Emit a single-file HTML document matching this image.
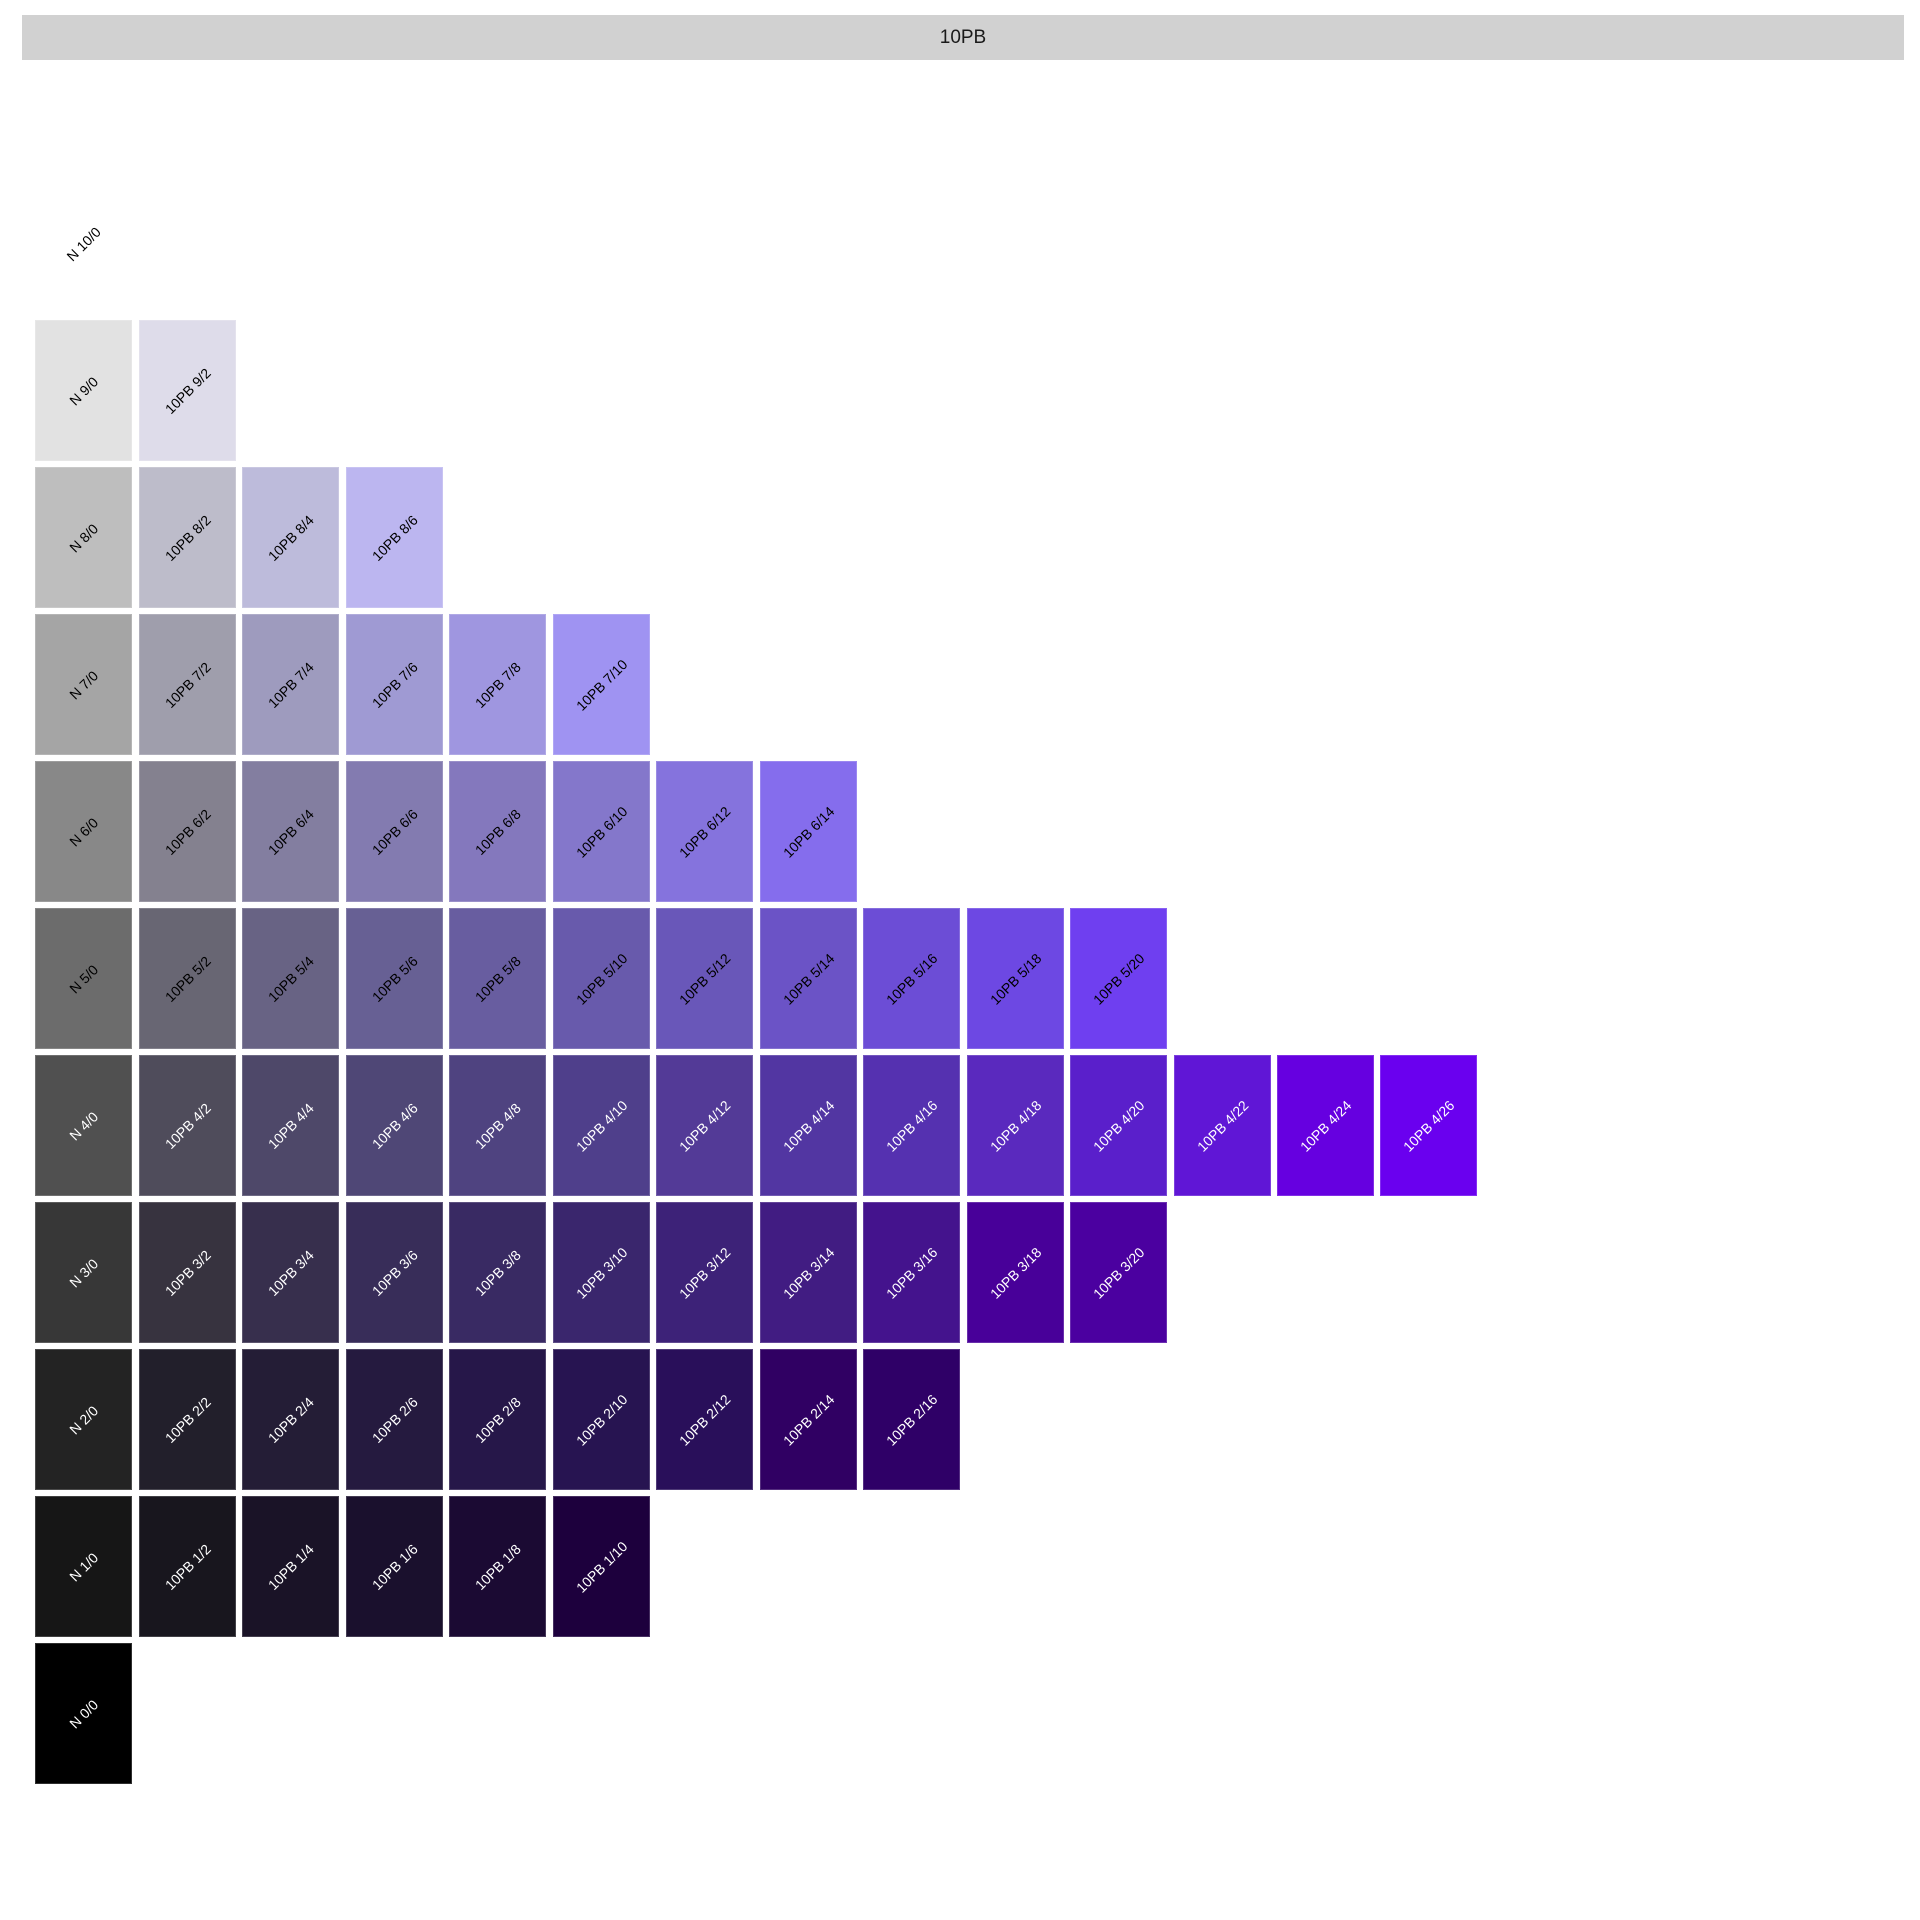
<!DOCTYPE html>
<html><head><meta charset="utf-8"><style>
body{margin:0;width:1920px;height:1920px;background:#fff;position:relative;overflow:hidden;font-family:"Liberation Sans",sans-serif}
.h{position:absolute;left:22px;top:15px;width:1882px;height:45px;background:#d1d1d1;font-size:19px;line-height:45px;text-align:center;color:#1a1a1a}
.t{position:absolute;width:97px;height:141px;display:flex;align-items:center;justify-content:center;box-sizing:border-box;border:1px solid rgba(255,255,255,.18);font-size:14px;color:#000}
.t span{transform:rotate(-45deg);white-space:nowrap}
.w{color:#fff}
</style></head><body>
<div class="h">10PB</div>
<div class="t" style="left:35px;top:173px;border:none"><span>N 10/0</span></div>

<div class="t" style="left:35px;top:320px;background:#e2e2e2"><span>N 9/0</span></div>
<div class="t" style="left:139px;top:320px;background:#dedcea"><span>10PB 9/2</span></div>

<div class="t" style="left:35px;top:467px;background:#bebebe"><span>N 8/0</span></div>
<div class="t" style="left:139px;top:467px;background:#bdbcca"><span>10PB 8/2</span></div>
<div class="t" style="left:242px;top:467px;background:#bdbbdb"><span>10PB 8/4</span></div>
<div class="t" style="left:346px;top:467px;background:#bcb6f0"><span>10PB 8/6</span></div>

<div class="t" style="left:35px;top:614px;background:#a5a5a5"><span>N 7/0</span></div>
<div class="t" style="left:139px;top:614px;background:#9f9eac"><span>10PB 7/2</span></div>
<div class="t" style="left:242px;top:614px;background:#9e9bbe"><span>10PB 7/4</span></div>
<div class="t" style="left:346px;top:614px;background:#9f9ad3"><span>10PB 7/6</span></div>
<div class="t" style="left:449px;top:614px;background:#9f96e0"><span>10PB 7/8</span></div>
<div class="t" style="left:553px;top:614px;background:#9f93f2"><span>10PB 7/10</span></div>

<div class="t" style="left:35px;top:761px;background:#888888"><span>N 6/0</span></div>
<div class="t" style="left:139px;top:761px;background:#84818f"><span>10PB 6/2</span></div>
<div class="t" style="left:242px;top:761px;background:#837ea0"><span>10PB 6/4</span></div>
<div class="t" style="left:346px;top:761px;background:#837bb0"><span>10PB 6/6</span></div>
<div class="t" style="left:449px;top:761px;background:#8478bd"><span>10PB 6/8</span></div>
<div class="t" style="left:553px;top:761px;background:#8477cb"><span>10PB 6/10</span></div>
<div class="t" style="left:656px;top:761px;background:#8573dd"><span>10PB 6/12</span></div>
<div class="t" style="left:760px;top:761px;background:#856ded"><span>10PB 6/14</span></div>

<div class="t" style="left:35px;top:908px;background:#6c6c6c"><span>N 5/0</span></div>
<div class="t" style="left:139px;top:908px;background:#686673"><span>10PB 5/2</span></div>
<div class="t" style="left:242px;top:908px;background:#686384"><span>10PB 5/4</span></div>
<div class="t" style="left:346px;top:908px;background:#676094"><span>10PB 5/6</span></div>
<div class="t" style="left:449px;top:908px;background:#685da0"><span>10PB 5/8</span></div>
<div class="t" style="left:553px;top:908px;background:#685aac"><span>10PB 5/10</span></div>
<div class="t" style="left:656px;top:908px;background:#6957b9"><span>10PB 5/12</span></div>
<div class="t" style="left:760px;top:908px;background:#6b53c6"><span>10PB 5/14</span></div>
<div class="t" style="left:863px;top:908px;background:#6c4dd6"><span>10PB 5/16</span></div>
<div class="t" style="left:967px;top:908px;background:#6d48e3"><span>10PB 5/18</span></div>
<div class="t" style="left:1070px;top:908px;background:#6f3ff0"><span>10PB 5/20</span></div>

<div class="t w" style="left:35px;top:1055px;background:#505050"><span>N 4/0</span></div>
<div class="t w" style="left:139px;top:1055px;background:#4f4c5b"><span>10PB 4/2</span></div>
<div class="t w" style="left:242px;top:1055px;background:#4e4869"><span>10PB 4/4</span></div>
<div class="t w" style="left:346px;top:1055px;background:#4f4776"><span>10PB 4/6</span></div>
<div class="t w" style="left:449px;top:1055px;background:#4f4380"><span>10PB 4/8</span></div>
<div class="t w" style="left:553px;top:1055px;background:#4f3f8b"><span>10PB 4/10</span></div>
<div class="t w" style="left:656px;top:1055px;background:#533a97"><span>10PB 4/12</span></div>
<div class="t w" style="left:760px;top:1055px;background:#5236a2"><span>10PB 4/14</span></div>
<div class="t w" style="left:863px;top:1055px;background:#5531b0"><span>10PB 4/16</span></div>
<div class="t w" style="left:967px;top:1055px;background:#5a29be"><span>10PB 4/18</span></div>
<div class="t w" style="left:1070px;top:1055px;background:#5a1fcb"><span>10PB 4/20</span></div>
<div class="t w" style="left:1174px;top:1055px;background:#6016d6"><span>10PB 4/22</span></div>
<div class="t w" style="left:1277px;top:1055px;background:#6600e0"><span>10PB 4/24</span></div>
<div class="t w" style="left:1380px;top:1055px;background:#6a00ef"><span>10PB 4/26</span></div>

<div class="t w" style="left:35px;top:1202px;background:#373737"><span>N 3/0</span></div>
<div class="t w" style="left:139px;top:1202px;background:#37333f"><span>10PB 3/2</span></div>
<div class="t w" style="left:242px;top:1202px;background:#372f4d"><span>10PB 3/4</span></div>
<div class="t w" style="left:346px;top:1202px;background:#382d59"><span>10PB 3/6</span></div>
<div class="t w" style="left:449px;top:1202px;background:#392a63"><span>10PB 3/8</span></div>
<div class="t w" style="left:553px;top:1202px;background:#3a266d"><span>10PB 3/10</span></div>
<div class="t w" style="left:656px;top:1202px;background:#3d2278"><span>10PB 3/12</span></div>
<div class="t w" style="left:760px;top:1202px;background:#411c82"><span>10PB 3/14</span></div>
<div class="t w" style="left:863px;top:1202px;background:#44138d"><span>10PB 3/16</span></div>
<div class="t w" style="left:967px;top:1202px;background:#480099"><span>10PB 3/18</span></div>
<div class="t w" style="left:1070px;top:1202px;background:#4b00a0"><span>10PB 3/20</span></div>

<div class="t w" style="left:35px;top:1349px;background:#232323"><span>N 2/0</span></div>
<div class="t w" style="left:139px;top:1349px;background:#221f2b"><span>10PB 2/2</span></div>
<div class="t w" style="left:242px;top:1349px;background:#241d36"><span>10PB 2/4</span></div>
<div class="t w" style="left:346px;top:1349px;background:#251a3f"><span>10PB 2/6</span></div>
<div class="t w" style="left:449px;top:1349px;background:#261749"><span>10PB 2/8</span></div>
<div class="t w" style="left:553px;top:1349px;background:#271451"><span>10PB 2/10</span></div>
<div class="t w" style="left:656px;top:1349px;background:#290f5a"><span>10PB 2/12</span></div>
<div class="t w" style="left:760px;top:1349px;background:#300063"><span>10PB 2/14</span></div>
<div class="t w" style="left:863px;top:1349px;background:#2f0067"><span>10PB 2/16</span></div>

<div class="t w" style="left:35px;top:1496px;background:#161616"><span>N 1/0</span></div>
<div class="t w" style="left:139px;top:1496px;background:#18161e"><span>10PB 1/2</span></div>
<div class="t w" style="left:242px;top:1496px;background:#1a1327"><span>10PB 1/4</span></div>
<div class="t w" style="left:346px;top:1496px;background:#1a102d"><span>10PB 1/6</span></div>
<div class="t w" style="left:449px;top:1496px;background:#1b0a33"><span>10PB 1/8</span></div>
<div class="t w" style="left:553px;top:1496px;background:#1d003d"><span>10PB 1/10</span></div>

<div class="t w" style="left:35px;top:1643px;background:#000000"><span>N 0/0</span></div>
</body></html>
